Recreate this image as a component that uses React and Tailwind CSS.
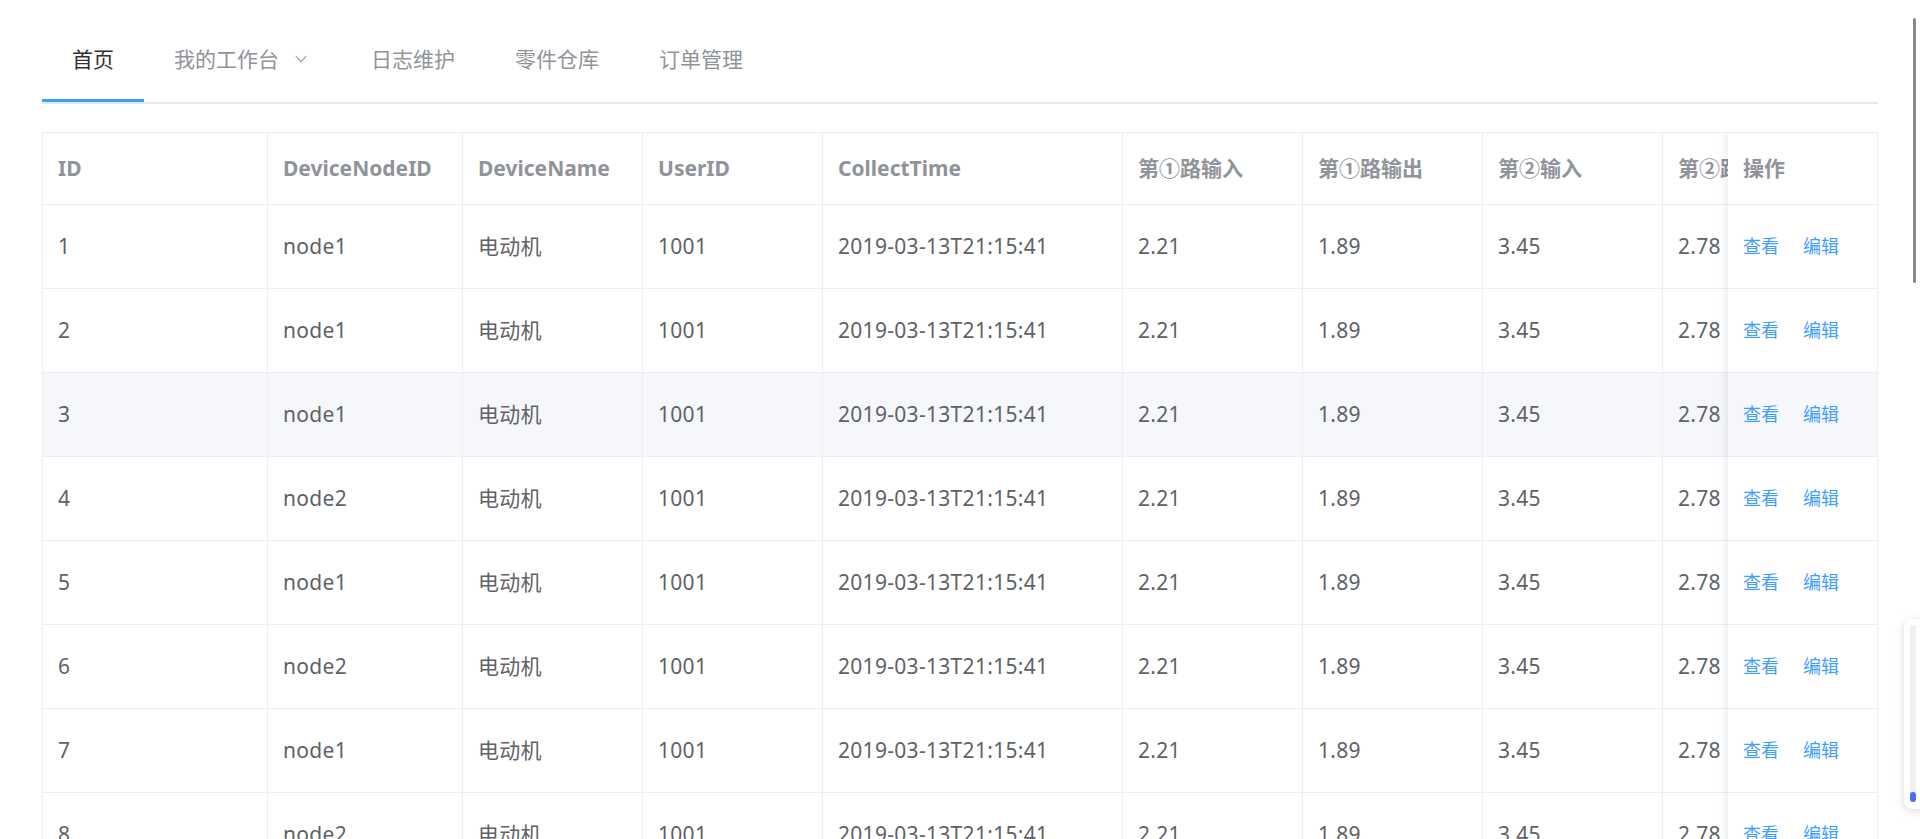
import React from 'react'

const tabs = ['首页', '我的工作台', '日志维护', '零件仓库', '订单管理']

const columns = [
  { key: 'id', label: 'ID', width: 'w-[225px]' },
  { key: 'node', label: 'DeviceNodeID', width: 'w-[195px]' },
  { key: 'name', label: 'DeviceName', width: 'w-[180px]' },
  { key: 'user', label: 'UserID', width: 'w-[180px]' },
  { key: 'time', label: 'CollectTime', width: 'w-[300px]' },
  { key: 'in1', label: '第①路输入', width: 'w-[180px]' },
  { key: 'out1', label: '第①路输出', width: 'w-[180px]' },
  { key: 'in2', label: '第②输入', width: 'w-[180px]' },
  { key: 'out2', label: '第②路输出', width: 'w-[180px]' },
  { key: 'op', label: '操作', width: 'w-[150px]' },
]

const nodes = ['node1', 'node1', 'node1', 'node2', 'node1', 'node2', 'node1', 'node2', 'node1', 'node2']

const rows = nodes.map((node, i) => ({
  id: i + 1,
  node,
  name: '电动机',
  user: '1001',
  time: '2019-03-13T21:15:41',
  in1: '2.21',
  out1: '1.89',
  in2: '3.45',
  out2: '2.78',
  op: '',
}))

function Chevron() {
  return (
    <svg className="ml-[16px] mr-[4px] w-[12px] h-[8px]" viewBox="0 0 12 8" fill="none">
      <path d="M0.8 1L6 6.6L11.2 1" stroke="#909399" strokeWidth="1.1" />
    </svg>
  )
}

export default function App() {
  return (
    <div className="relative h-screen w-full overflow-hidden bg-white px-[42px] font-['Noto_Sans','Noto_Sans_CJK_SC',sans-serif]">
      {/* Tabs */}
      <div className="flex h-[104px] border-b-2 border-[#e4e7ed]">
        {tabs.map((t, i) => (
          <div
            key={t}
            className={`relative flex items-start h-full px-[30px] pt-[44px] text-[21px] leading-[30px] ${
              i === 0 ? 'text-[#303133]' : 'text-[#909399]'
            }`}
          >
            <span>{t}</span>
            {i === 1 && (
              <span className="flex items-center h-[30px]">
                <Chevron />
              </span>
            )}
            {i === 0 && <div className="absolute left-0 right-0 bottom-0 h-[3px] bg-[#409eff]" />}
          </div>
        ))}
      </div>

      {/* Table */}
      <div className="relative mt-[28px] border-l border-t border-[#ebeef5] overflow-hidden">
        <div className="flex flex-col">
          <div className="flex h-[72px] border-b border-[#ebeef5]">
            {columns.map((c) => (
              <div
                key={c.key}
                className={`${c.width} shrink-0 flex items-center px-[15px] border-r border-[#ebeef5] text-[21px] font-bold text-[#909399] whitespace-nowrap overflow-hidden`}
              >
                {c.label}
              </div>
            ))}
          </div>
          {rows.map((r, ri) => (
            <div
              key={r.id}
              className={`flex h-[84px] border-b border-[#ebeef5] ${ri === 2 ? 'bg-[#f5f7fa]' : 'bg-white'}`}
            >
              {columns.map((c) => (
                <div
                  key={c.key}
                  className={`${c.width} shrink-0 flex items-center px-[15px] border-r border-[#ebeef5] text-[21px] tracking-[0.3px] text-[#606266] whitespace-nowrap overflow-hidden`}
                >
                  {r[c.key]}
                </div>
              ))}
            </div>
          ))}
        </div>

        {/* Fixed right column */}
        <div className="absolute top-0 right-0 w-[150px] bg-white shadow-[0_0_10px_rgba(0,0,0,0.12)]">
          <div className="flex items-center h-[72px] px-[15px] border-r border-b border-[#ebeef5] text-[21px] font-bold text-[#909399]">
            操作
          </div>
          {rows.map((r, ri) => (
            <div
              key={r.id}
              className={`flex items-center gap-[24px] h-[84px] px-[15px] border-r border-b border-[#ebeef5] text-[18px] text-[#409eff] ${
                ri === 2 ? 'bg-[#f5f7fa]' : 'bg-white'
              }`}
            >
              <span>查看</span>
              <span>编辑</span>
            </div>
          ))}
        </div>
      </div>

      {/* Page scrollbar thumb */}
      <div className="absolute top-[18px] left-[1913px] w-[3px] h-[265px] rounded-full bg-[#8a8a8a]" />

      {/* Floating side widget */}
      <div className="absolute top-[619px] left-[1904px] w-[28px] h-[190px] rounded-[8px] bg-white shadow-[0_2px_10px_rgba(0,0,0,0.15)] pl-[6px] pt-[6px]">
        <div className="relative w-[6px] h-[177px] rounded-full bg-[#efefef]">
          <div className="absolute bottom-0 left-0 w-[6px] h-[10px] rounded-full bg-[#4a6cf7]" />
        </div>
      </div>
    </div>
  )
}
